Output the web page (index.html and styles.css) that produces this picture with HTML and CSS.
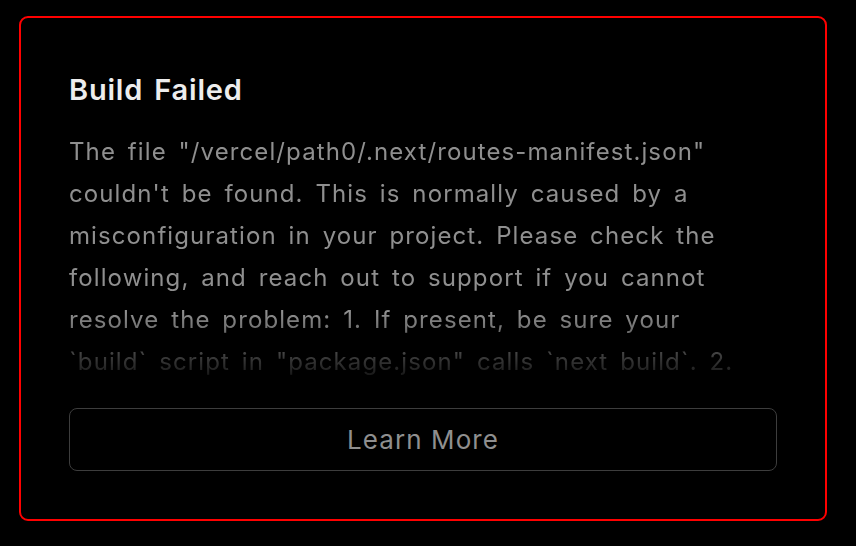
FILE: index.html
```html
<!DOCTYPE html>
<html lang="en">
<head>
    <meta charset="UTF-8">
    <meta name="viewport" content="width=device-width, initial-scale=1.0">
    <title>Build Failed</title>
    <link rel="stylesheet" href="styles.css">
</head>
<body>
    <div class="error-card">
        <h2 class="error-title">Build Failed</h2>
        <p class="error-message">The file "/vercel/path0/.next/routes-manifest.json" couldn't be found. This is normally caused by a misconfiguration in your project. Please check the following, and reach out to support if you cannot resolve the problem: 1. If present, be sure your `build` script in "package.json" calls `next build`. 2. Navigate to your project's settings in the Vercel dashboard, and verify that the "Build Command" is not overridden, or that it calls `next build`. 3. Navigate to your project's settings in the Vercel dashboard, and verify that the "Output Directory" is not overridden.</p>
        <button class="learn-more">Learn More</button>
    </div>
</body>
</html>
```

FILE: styles.css
```css
* {
    margin: 0;
    padding: 0;
    box-sizing: border-box;
    font-family: Inter, "Noto Sans", sans-serif;
}
body {
    background: #000;
    padding: 16px 0 0 19px;
}
.error-card {
    width: 808px;
    height: 505px;
    border: 2px solid #ff0000;
    border-radius: 9px;
    padding: 54px 48px 48px;
    display: flex;
    flex-direction: column;
}
.error-title {
    color: #ededed;
    font-size: 29px;
    font-weight: 600;
    letter-spacing: 0.8px;
    word-spacing: 3px;
    line-height: 36px;
    margin-bottom: 23px;
}
.error-message {
    color: #8f8f8f;
    font-size: 24px;
    letter-spacing: 1.1px;
    word-spacing: 4px;
    line-height: 42px;
    height: 252px;
    padding-right: 12px;
    overflow: hidden;
    -webkit-mask-image: linear-gradient(to bottom, #000 72%, transparent 102%);
    mask-image: linear-gradient(to bottom, #000 72%, transparent 102%);
}
.learn-more {
    margin-top: auto;
    height: 63px;
    width: 100%;
    background: transparent;
    border: 1.5px solid #3d3d3d;
    border-radius: 8px;
    color: #8f8f8f;
    font-size: 26px;
    letter-spacing: 1.1px;
    cursor: pointer;
}
```
